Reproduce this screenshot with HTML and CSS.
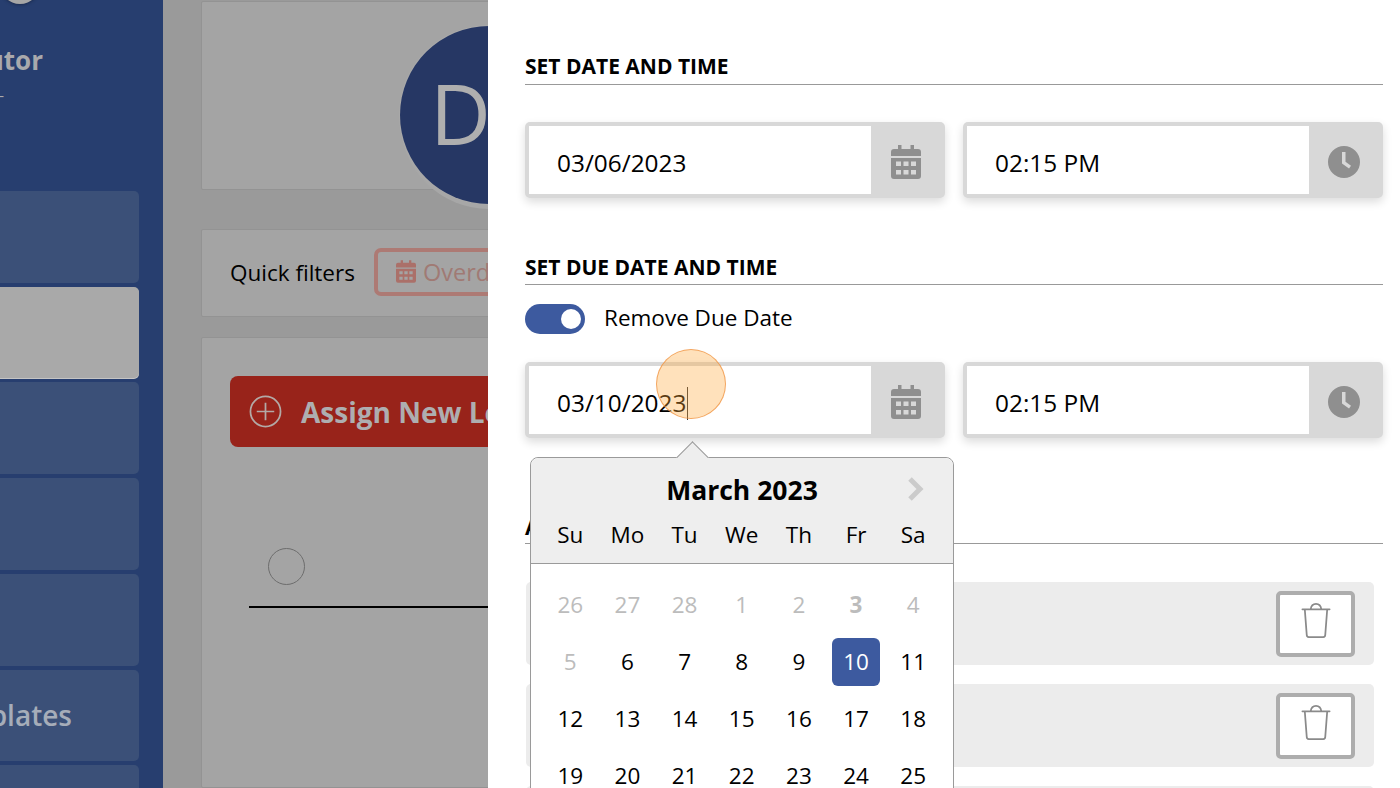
FILE: index.html
```html
<!DOCTYPE html>
<html lang="en">
<head>
<meta charset="utf-8">
<title>Set date and time</title>
<link rel="stylesheet" href="styles.css">
</head>
<body>
<svg class="defs" width="0" height="0" aria-hidden="true">
  <symbol id="cal" viewBox="0 0 30 34">
    <path d="M7 0h3.500v4H19.500V0H23v4h4a3 3 0 0 1 3 3v4H0V7a3 3 0 0 1 3-3h4z"/>
    <path fill-rule="evenodd" d="M0 13h30v18a3 3 0 0 1-3 3H3a3 3 0 0 1-3-3zM5 16.500v4.500h5v-4.500zm7.500 0v4.500h5v-4.500zm7.500 0v4.500h5v-4.500zM5 25v4.500h5V25zm7.500 0v4.500h5V25zm7.500 0v4.500h5V25z"/>
  </symbol>
  <symbol id="clock" viewBox="0 0 32 32">
    <path fill-rule="evenodd" d="M16 0a16 16 0 1 1 0 32a16 16 0 0 1 0-32zM14 6v11.500l7 5 2-2.700-5.500-4V6z"/>
  </symbol>
  <symbol id="trash" viewBox="0 0 30 36">
    <path d="M1 6.500h28M3.500 7l2 26a2 2 0 0 0 2 2h15a2 2 0 0 0 2-2l2-26M9.500 6.500C10 3 12 1 15 1s5 2 5.500 5.500" fill="none" stroke="currentColor" stroke-width="1.800" stroke-linecap="round"/>
  </symbol>
</svg>

<div class="app">
  <aside class="sidebar">
    <div class="avatar-row"><span class="mini-avatar"></span></div>
    <div class="role"><span>Tutor</span></div>
    <div class="role-sub"><span>–</span></div>
    <nav class="nav">
      <div class="nav-item"></div>
      <div class="nav-item active"></div>
      <div class="nav-item"></div>
      <div class="nav-item"></div>
      <div class="nav-item"></div>
      <div class="nav-item label"><span>Templates</span></div>
      <div class="nav-item"></div>
    </nav>
  </aside>

  <main class="main">
    <section class="card profile"><div class="big-avatar">D</div></section>
    <section class="card filters">
      <span class="filters-title">Quick filters</span>
      <span class="chip"><svg class="chip-icon"><use href="#cal"/></svg>Overdue</span>
    </section>
    <section class="card lessons">
      <button class="assign">
        <svg class="plus" viewBox="0 0 34 34"><circle cx="17" cy="17" r="15.500"/><path d="M17 8v18M8 17h18"/></svg>
        Assign New Lesson
      </button>
      <div class="row-check"><span class="radio"></span></div>
      <div class="row-line"></div>
    </section>
  </main>
</div>

<aside class="drawer">
  <h2 class="heading first">SET DATE AND TIME</h2>
  <div class="fields">
    <div class="field">
      <div class="value">03/06/2023</div>
      <div class="addon"><svg class="i-cal"><use href="#cal"/></svg></div>
    </div>
    <div class="field">
      <div class="value">02:15 PM</div>
      <div class="addon"><svg class="i-clock"><use href="#clock"/></svg></div>
    </div>
  </div>

  <h2 class="heading second">SET DUE DATE AND TIME</h2>
  <div class="toggle-row">
    <span class="toggle"><span class="knob"></span></span>
    <span class="toggle-label">Remove Due Date</span>
  </div>
  <div class="fields">
    <div class="field">
      <div class="value">03/10/2023<span class="caret"></span></div>
      <div class="addon"><svg class="i-cal"><use href="#cal"/></svg></div>
    </div>
    <div class="field">
      <div class="value">02:15 PM</div>
      <div class="addon"><svg class="i-clock"><use href="#clock"/></svg></div>
    </div>
  </div>

  <h2 class="heading third">ASSIGNED TO</h2>
  <div class="rows">
    <div class="person"><button class="del"><svg class="i-trash"><use href="#trash"/></svg></button></div>
    <div class="person"><button class="del"><svg class="i-trash"><use href="#trash"/></svg></button></div>
    <div class="person"></div>
  </div>
</aside>

<div class="calendar">
  <span class="cal-arrow"></span>
  <header class="cal-head">
    <div class="cal-title">March 2023</div>
    <svg class="cal-next" viewBox="0 0 18 26"><path d="M4 3l10 10L4 23"/></svg>
    <div class="cal-week">
      <span>Su</span><span>Mo</span><span>Tu</span><span>We</span><span>Th</span><span>Fr</span><span>Sa</span>
    </div>
  </header>
  <div class="cal-grid">
    <span class="off">26</span><span class="off">27</span><span class="off">28</span><span class="off">1</span><span class="off">2</span><span class="off today">3</span><span class="off">4</span>
    <span class="off">5</span><span>6</span><span>7</span><span>8</span><span>9</span><span class="sel">10</span><span>11</span>
    <span>12</span><span>13</span><span>14</span><span>15</span><span>16</span><span>17</span><span>18</span>
    <span>19</span><span>20</span><span>21</span><span>22</span><span>23</span><span>24</span><span>25</span>
  </div>
</div>

<div class="pointer"></div>
</body>
</html>
```

FILE: styles.css
```css
* { box-sizing: border-box; }
html, body { margin: 0; height: 100%; overflow: hidden; }
body { font-family: "Open Sans", "Noto Sans", sans-serif; color: #000; background: #9a9a9a; position: relative; }
.defs { position: absolute; }
button { font-family: inherit; }

.app { display: flex; height: 788px; overflow: hidden; }

.sidebar { width: 163px; flex: none; background: #273e6f; box-shadow: 1px 0 0 #a0a0a0; overflow: hidden; }
.avatar-row { height: 44px; display: flow-root; }
.mini-avatar { display: block; width: 40px; height: 40px; border-radius: 50%; background: #a6a6a6; margin-top: -36px; box-shadow: 0 1px 3px #1c2c50; }
.role { display: flex; justify-content: flex-end; width: 43px; font-size: 26px; font-weight: 700; line-height: 32px; color: #a9a9ac; white-space: nowrap; }
.role-sub { display: flex; justify-content: flex-end; width: 4px; font-size: 14px; line-height: 14px; color: #a9a9ac; margin-top: 13px; }
.nav { display: flex; flex-direction: column; gap: 4px; margin-top: 88px; width: 139px; }
.nav-item { height: 92px; flex: none; background: #3b5078; border-radius: 0 5px 5px 0; display: flex; align-items: center; justify-content: flex-end; }
.nav-item.active { height: 91px; background: #a9a9a9; box-shadow: 0 1px 0 #c4c4c4; }
.nav-item.label { height: 91px; font-size: 28px; font-weight: 600; color: #a6adb9; overflow: hidden; white-space: nowrap; padding: 0 67px 2px 0; }

.main { flex: 1; padding: 1px 0 0 38px; display: flex; flex-direction: column; gap: 39px; overflow: hidden; background: #9a9a9a; }
.card { background: #a4a4a4; border: 1px solid #939393; border-radius: 2px; width: 1100px; flex: none; }
.profile { height: 189px; position: relative; }
.big-avatar { position: absolute; left: 198px; top: 24px; width: 178px; height: 178px; border-radius: 50%; background: #263764; box-shadow: 0 0 0 1px #a9a9a9, 0 5px 0 0 #a7a7a7; color: #afafaf; font-size: 84px; line-height: 174px; padding-left: 30px; }
.filters { height: 88px; display: flex; align-items: center; padding: 0 0 1px 28px; gap: 19px; }
.filters-title { font-size: 22.500px; color: #000; }
.chip { height: 48px; margin-top: -2px; border: 4px solid #ad7a74; border-radius: 7px; display: flex; align-items: center; padding: 0 16px 0 18px; gap: 7px; color: #a07a74; font-size: 23.500px; background: #a4a4a4; }
.chip-icon { width: 20px; height: 23px; fill: #ab7069; }
.lessons { flex: 1; padding: 38px 0 0 28px; margin-top: -19px; }
.assign { display: flex; align-items: center; width: 400px; height: 71px; border: 0; border-radius: 8px; background: #98231a; color: #aeaeb0; font-size: 28px; font-weight: 700; padding: 0 0 0 19px; gap: 19px; white-space: nowrap; }
.plus { width: 33px; height: 33px; flex: none; fill: none; stroke: #b3a9a6; stroke-width: 1.800; }
.row-check { margin: 101px 0 0 38px; height: 37px; }
.radio { display: block; width: 37px; height: 37px; border-radius: 50%; border: 1.500px solid #6d6d6d; }
.row-line { height: 2px; background: #000; margin: 21px 0 0 19px; }

.drawer { position: absolute; left: 488px; top: 0; width: 912px; height: 788px; background: #fff; padding: 53px 17px 0 37px; overflow: hidden; }
.heading { margin: 0; font-size: 21px; line-height: 27px; font-weight: 700; padding-bottom: 4px; border-bottom: 1px solid #999; color: #000; width: 858px; }
.second { margin-top: 56px; padding-bottom: 3px; }
.third { margin-top: 76px; padding-bottom: 2px; }
.fields { display: flex; gap: 18px; margin-top: 37px; width: 858px; }
.toggle-row + .fields { margin-top: 28px; }
.field { flex: 1; height: 76px; display: flex; background: #d8d8d8; border-radius: 5px; padding: 4px 0 4px 4px; box-shadow: 0 4px 10px rgba(0,0,0,.14); }
.value { flex: 1; background: #fff; font-size: 24.400px; line-height: 68px; padding: 3px 0 0 28px; color: #000; position: relative; }
.addon { width: 74px; flex: none; display: flex; align-items: center; justify-content: center; padding-right: 4px; }
.i-cal { width: 30px; height: 34px; fill: #8f8f8f; margin-top: 4px; }
.i-clock { width: 32px; height: 32px; fill: #8f8f8f; margin-top: 3px; }
.caret { display: inline-block; width: 1px; height: 33px; margin-left: 1px; background: #333; vertical-align: -8px; }
.toggle-row { display: flex; align-items: center; gap: 19px; margin-top: 19px; height: 30px; }
.toggle { width: 60px; height: 30px; border-radius: 15px; background: #3d5a9f; display: flex; align-items: center; justify-content: flex-end; padding-right: 4px; flex: none; }
.knob { width: 20px; height: 20px; border-radius: 50%; background: #fff; }
.toggle-label { font-size: 22.500px; line-height: 30px; margin-top: -3px; }
.rows { display: flex; flex-direction: column; gap: 19px; margin-top: 38px; width: 848px; margin-left: 1px; }
.person { height: 83px; flex: none; background: #ececec; border-radius: 5px; display: flex; align-items: center; justify-content: flex-end; padding-right: 19px; }
.del { width: 79px; height: 66px; background: #fff; border: 4px solid #adadad; border-radius: 5px; padding: 0; display: flex; align-items: center; justify-content: center; color: #8a8a8a; }
.i-trash { width: 30px; height: 35px; margin-top: -6px; }

.calendar { position: absolute; left: 530px; top: 457px; width: 424px; height: 340px; background: #fff; border: 1px solid #9a9a9a; border-radius: 8px 8px 0 0; }
.cal-arrow { position: absolute; left: 150px; top: -12px; width: 23px; height: 23px; background: #eee; border-left: 1px solid #9a9a9a; border-top: 1px solid #9a9a9a; transform: rotate(45deg); }
.cal-head { position: relative; height: 106px; background: #eee; border-bottom: 1px solid #9a9a9a; border-radius: 8px 8px 0 0; }
.cal-title { text-align: center; font-size: 26.500px; font-weight: 700; line-height: 36px; padding-top: 14px; height: 50px; }
.cal-next { position: absolute; right: 29px; top: 18px; width: 18px; height: 26px; fill: none; stroke: #cbcbcb; stroke-width: 5; }
.cal-week, .cal-grid { display: grid; grid-template-columns: repeat(7, 57.170px); padding-left: 10.700px; text-align: center; font-size: 22.500px; }
.cal-week { line-height: 30px; padding-top: 12px; }
.cal-grid { grid-auto-rows: 57px; padding-top: 12px; align-items: center; justify-items: center; }
.cal-grid span { display: block; width: 48px; height: 48px; line-height: 48px; }
.off { color: #bcbcbc; }
.today { font-weight: 700; }
.sel { background: #3d5a9f; color: #fff; border-radius: 6px; }

.pointer { position: absolute; left: 656px; top: 349px; width: 70px; height: 70px; border-radius: 50%; background: rgba(255,170,60,.35); border: 1.500px solid rgba(240,150,70,.8); }
```
